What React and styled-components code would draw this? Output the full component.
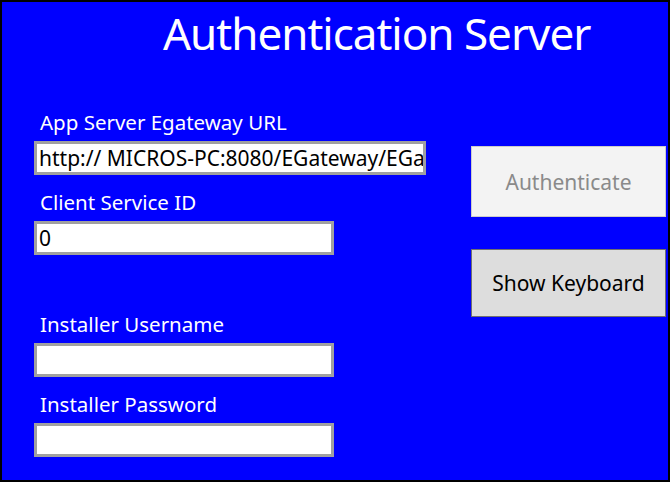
import React from 'react';
import styled, { createGlobalStyle } from 'styled-components';

const GlobalStyle = createGlobalStyle`
  html, body {
    margin: 0;
    padding: 0;
    background: #ffffff;
  }
  body {
    font-family: "Noto Sans", "Open Sans", sans-serif;
  }
`;

const Frame = styled.div`
  box-sizing: border-box;
  width: 670px;
  height: 482px;
  border: 2px solid #000000;
  background: #0000ff;
  display: flex;
  flex-direction: column;
  overflow: hidden;
`;

const Title = styled.h1`
  box-sizing: border-box;
  height: 93px;
  margin: 0;
  padding: 9px 0 0 161px;
  font-size: 44px;
  font-weight: 400;
  line-height: 44px;
  letter-spacing: -1px;
  color: #ffffff;
  white-space: nowrap;
`;

const Content = styled.div`
  display: grid;
  grid-template-columns: 392px 195px;
  column-gap: 45px;
  align-items: start;
  padding-left: 32px;
`;

const Form = styled.div`
  display: flex;
  flex-direction: column;
`;

const Label = styled.label`
  display: block;
  margin: ${(p) => (p.$spaced ? '57px' : '15px')} 0 7px 6px;
  font-size: 20.5px;
  line-height: 24px;
  color: #ffffff;
  white-space: nowrap;
`;

const Input = styled.input`
  box-sizing: border-box;
  width: ${(p) => p.$width}px;
  height: 34px;
  margin: 0;
  padding: 0 0 0 2px;
  border: 3px solid #a0a0a0;
  border-radius: 0;
  background: #ffffff;
  font-family: inherit;
  font-size: 21px;
  color: #000000;
  outline: none;
`;

const Actions = styled.div`
  display: flex;
  flex-direction: column;
  gap: 32px;
  padding-top: 51px;
`;

const Button = styled.button`
  box-sizing: border-box;
  width: 195px;
  height: ${(p) => p.$height}px;
  margin: 0;
  padding: 0;
  border: 1px solid ${(p) => (p.disabled ? '#cccccc' : '#707070')};
  border-radius: 0;
  background: ${(p) => (p.disabled ? '#f3f3f3' : '#dddddd')};
  color: ${(p) => (p.disabled ? '#8a8a8a' : '#000000')};
  font-family: inherit;
  font-size: 21px;
`;

export default function App() {
  return (
    <>
      <GlobalStyle />
      <Frame>
        <Title>Authentication Server</Title>
        <Content>
          <Form>
            <Label>App Server Egateway URL</Label>
            <Input $width={392} defaultValue="http:// MICROS-PC:8080/EGateway/EGateway.asmx" />
            <Label>Client Service ID</Label>
            <Input $width={300} defaultValue="0" />
            <Label $spaced>Installer Username</Label>
            <Input $width={300} />
            <Label>Installer Password</Label>
            <Input $width={300} type="password" />
          </Form>
          <Actions>
            <Button disabled $height={71}>Authenticate</Button>
            <Button $height={68}>Show Keyboard</Button>
          </Actions>
        </Content>
      </Frame>
    </>
  );
}
